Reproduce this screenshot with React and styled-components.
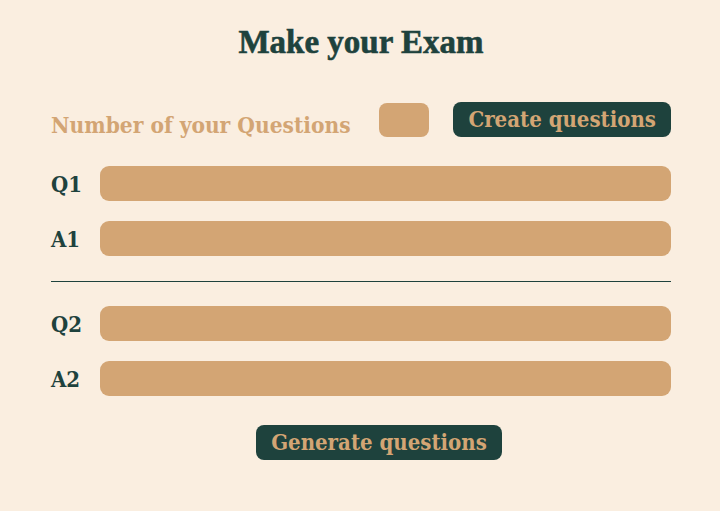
import React from "react";
import styled, { createGlobalStyle } from "styled-components";

const GREEN = "#1e423d";
const TAN = "#d3a574";
const BG = "#faeee0";
const BODY_FONT = `"DejaVu Serif Condensed", "DejaVu Serif", serif`;

const Global = createGlobalStyle`
  html, body { margin: 0; padding: 0; background: ${BG}; }
  body { font-family: ${BODY_FONT}; }
  * { box-sizing: border-box; }
`;

const Page = styled.div`
  width: 720px;
  height: 511px;
  background: ${BG};
  padding: 24px 49px 0 51px;
  display: flex;
  flex-direction: column;
`;

const Title = styled.h1`
  margin: 0;
  height: 36px;
  text-align: center;
  font-family: "Liberation Serif", serif;
  font-weight: 700;
  font-size: 33px;
  line-height: 36px;
  color: ${GREEN};
  -webkit-text-stroke: 0.6px ${GREEN};
`;

const TopRow = styled.div`
  margin-top: 42px;
  display: flex;
  align-items: flex-start;
  height: 35px;
`;

const Label = styled.span`
  font-family: ${BODY_FONT};
  font-weight: 700;
  font-size: ${(p) => p.size || 22}px;
  line-height: 26px;
  color: ${(p) => p.color || GREEN};
  white-space: nowrap;
  margin-top: 10px;
`;

const SmallBox = styled.input`
  width: 50px;
  height: 34px;
  margin-left: 28px;
  margin-top: 1px;
  border: none;
  border-radius: 8px;
  background: ${TAN};
  outline: none;
`;

const Button = styled.button`
  height: 35px;
  padding: 0 15px;
  border: none;
  border-radius: 8px;
  background: ${GREEN};
  color: ${TAN};
  font-family: ${BODY_FONT};
  font-weight: 700;
  font-size: 22px;
  line-height: 35px;
  white-space: nowrap;
  cursor: pointer;
`;

const CreateButton = styled(Button)`
  margin-left: auto;
`;

const Group = styled.div`
  display: flex;
  flex-direction: column;
  gap: 20px;
  margin-top: ${(p) => p.top}px;
`;

const Row = styled.div`
  display: flex;
  align-items: center;
  height: 35px;
`;

const RowLabel = styled.span`
  width: 49px;
  font-family: ${BODY_FONT};
  font-weight: 700;
  font-size: 22px;
  color: ${GREEN};
`;

const Field = styled.input`
  flex: 1;
  height: 35px;
  border: none;
  border-radius: 9px;
  background: ${TAN};
  outline: none;
`;

const Divider = styled.hr`
  margin: 25px 0 0;
  border: none;
  border-top: 1px solid ${GREEN};
  height: 0;
`;

const Footer = styled.div`
  display: flex;
  justify-content: center;
  margin-top: 29px;
  padding-left: 36px;
`;

export default function App() {
  return (
    <>
      <Global />
      <Page>
        <Title>Make your Exam</Title>
        <TopRow>
          <Label color={TAN} size={22.5}>Number of your Questions</Label>
          <SmallBox />
          <CreateButton>Create questions</CreateButton>
        </TopRow>
        <Group top={29}>
          <Row><RowLabel>Q1</RowLabel><Field /></Row>
          <Row><RowLabel>A1</RowLabel><Field /></Row>
        </Group>
        <Divider />
        <Group top={24}>
          <Row><RowLabel>Q2</RowLabel><Field /></Row>
          <Row><RowLabel>A2</RowLabel><Field /></Row>
        </Group>
        <Footer>
          <Button>Generate questions</Button>
        </Footer>
      </Page>
    </>
  );
}
